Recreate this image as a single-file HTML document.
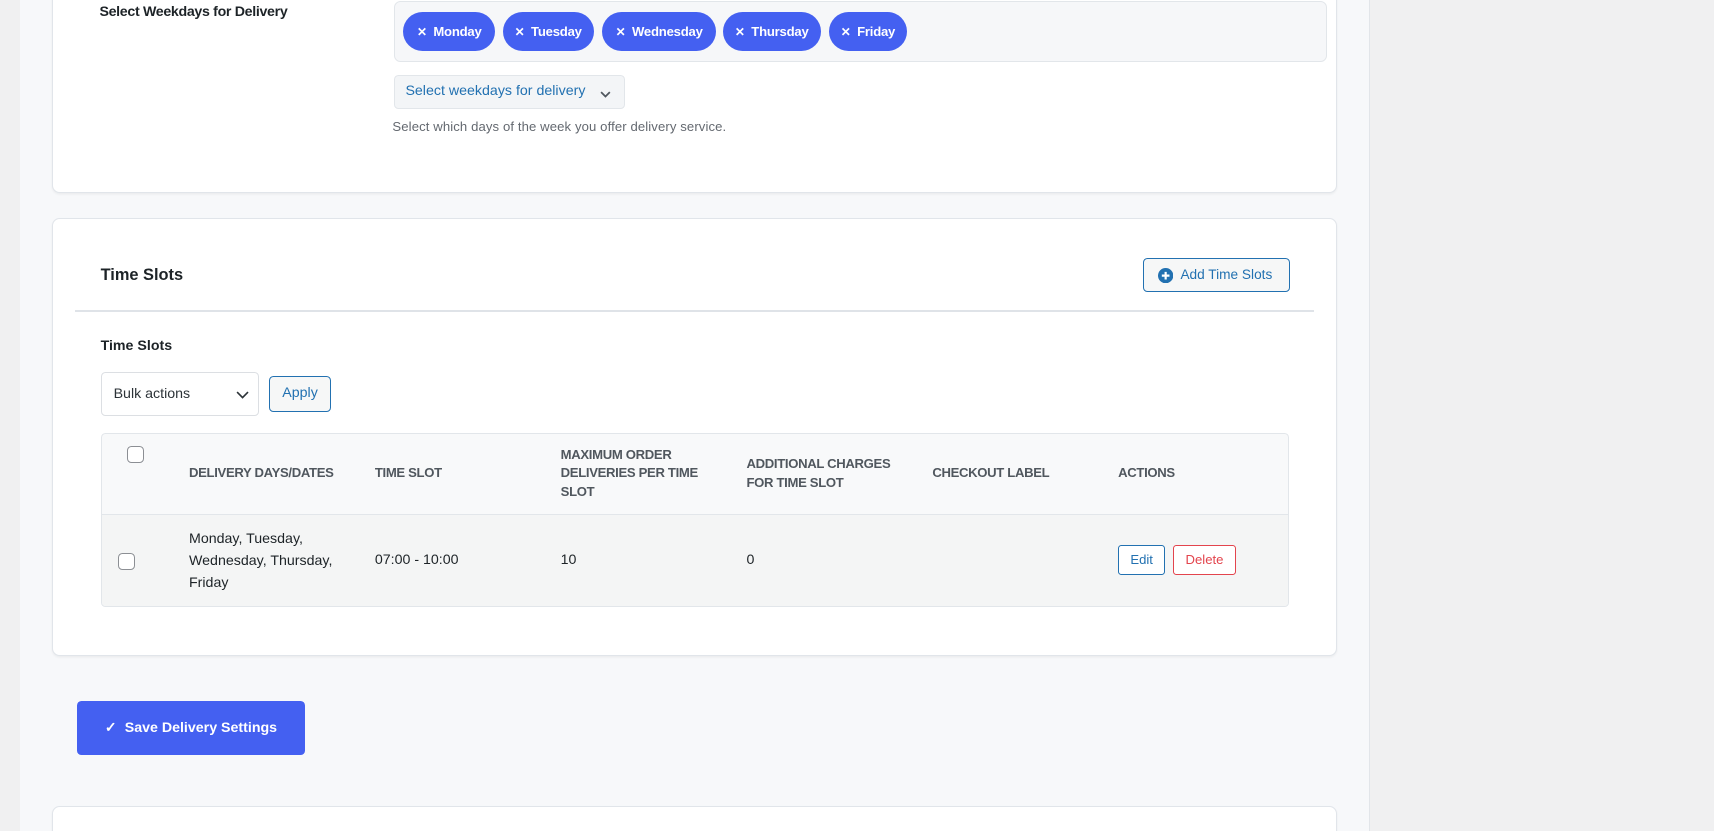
<!DOCTYPE html>
<html><head><meta charset="utf-8"><style>
*{box-sizing:border-box;margin:0;padding:0}
html,body{width:1714px;height:831px;overflow:hidden}
body{background:#f0f0f1;font-family:"Liberation Sans",sans-serif;}
#w{zoom:1.09311;position:relative;width:1568px;height:760px}
.main{position:absolute;left:18px;top:0;width:1235px;height:760px;background:#f7f8fa;border-right:1px solid #e2e5e9}
.card{position:absolute;left:48px;width:1175px;background:#fff;border:1px solid #e1e5ea;border-radius:7px;box-shadow:0 1px 2px rgba(0,0,0,.05)}
.abs{position:absolute}
.pill{position:absolute;top:11px;height:36px;background:#4460f1;color:#fff;border-radius:18px;font-size:12px;font-weight:bold;line-height:36px;text-align:center;letter-spacing:-0.2px}
.pill span{font-size:11px;margin-right:6px}
.th{position:absolute;top:0;height:73px;display:flex;align-items:center;font-size:12px;color:#50575e;text-transform:uppercase;line-height:17px;font-weight:bold;width:150px;letter-spacing:-0.3px}
.cb{position:absolute;width:16px;height:16px;border:1px solid #8c8f94;border-radius:4px;background:#fff}
.td{position:absolute;font-size:13px;color:#1d2327;line-height:20px}
</style></head><body><div id="w">
<div class="main"></div>
<div class="card" style="top:-10px;height:187px"></div>
<div class="abs" style="left:91px;top:4px;font-size:13px;color:#1d2327;font-weight:bold;letter-spacing:-0.3px">Select Weekdays for Delivery</div>
<div class="abs" style="left:360px;top:1px;width:854px;height:56px;background:#f6f7f9;border:1px solid #e2e6ea;border-radius:6px"></div>
<div class="pill" style="left:369px;width:84px"><span>✕</span>Monday</div>
<div class="pill" style="left:460px;width:83px"><span>✕</span>Tuesday</div>
<div class="pill" style="left:551px;width:104px"><span>✕</span>Wednesday</div>
<div class="pill" style="left:661px;width:90px"><span>✕</span>Thursday</div>
<div class="pill" style="left:758px;width:72px"><span>✕</span>Friday</div>
<div class="abs" style="left:360px;top:69px;width:212px;height:31px;background:#f3f5f7;border:1px solid #e2e6ea;border-radius:4px;font-size:13px;color:#2271b1;line-height:29px;padding-left:10px">Select weekdays for delivery
<svg style="position:absolute;left:188px;top:13px" width="10" height="7" viewBox="0 0 10 7"><path d="M1 1l4 4 4-4" fill="none" stroke="#50575e" stroke-width="1.6"/></svg></div>
<div class="abs" style="left:359px;top:109px;font-size:12px;color:#646970;letter-spacing:0.1px">Select which days of the week you offer delivery service.</div>

<div class="card" style="top:199px;height:401px"></div>
<div class="abs" style="left:92px;top:243px;font-size:15px;color:#1d2327;font-weight:bold">Time Slots</div>
<div class="abs" style="left:1046px;top:236px;width:134px;height:31px;border:1px solid #2271b1;border-radius:4px;background:#f6f7f7;color:#2271b1;font-size:12.5px;line-height:29px;padding-left:33px">Add Time Slots
<svg style="position:absolute;left:12px;top:8px" width="14" height="14" viewBox="0 0 14 14"><circle cx="7" cy="7" r="7" fill="#2271b1"/><path d="M7 3.5v7M3.5 7h7" stroke="#fff" stroke-width="2"/></svg></div>
<div class="abs" style="left:69px;top:284px;width:1133px;height:1px;background:#dfe3e8"></div>
<div class="abs" style="left:92px;top:309px;font-size:13px;color:#1d2327;font-weight:bold">Time Slots</div>
<div class="abs" style="left:92px;top:340px;width:145px;height:41px;border:1px solid #dcdfe3;border-radius:4px;background:#fff;font-size:13px;color:#2c3338;line-height:39px;padding-left:11px">Bulk actions
<svg style="position:absolute;left:123px;top:17px" width="12" height="8" viewBox="0 0 12 8"><path d="M1 1l5 5 5-5" fill="none" stroke="#2c3338" stroke-width="1.5"/></svg></div>
<div class="abs" style="left:246px;top:344px;width:57px;height:33px;border:1px solid #2271b1;border-radius:4px;background:#f6f7f7;color:#2271b1;font-size:13px;line-height:31px;text-align:center">Apply</div>

<div class="abs" style="left:92px;top:396px;width:1087px;height:159px;border:1px solid #e2e6ea;border-radius:4px;background:#f8f9fa;overflow:hidden">
 <div class="abs" style="left:0;top:73px;width:100%;height:86px;background:#f4f5f5;border-top:1px solid #e2e6ea"></div>
 <div class="cb" style="left:23px;top:11px"></div>
 <div class="th" style="left:80px">Delivery Days/Dates</div>
 <div class="th" style="left:250px">Time Slot</div>
 <div class="th" style="left:420px;width:140px">Maximum Order Deliveries per time slot</div>
 <div class="th" style="left:590px;width:145px">Additional Charges for time slot</div>
 <div class="th" style="left:760px">Checkout Label</div>
 <div class="th" style="left:930px">Actions</div>
 <div class="cb" style="left:15px;top:109px"></div>
 <div class="td" style="left:80px;top:87px;width:150px">Monday, Tuesday, Wednesday, Thursday, Friday</div>
 <div class="td" style="left:250px;top:106px">07:00 - 10:00</div>
 <div class="td" style="left:420px;top:106px">10</div>
 <div class="td" style="left:590px;top:106px">0</div>
 <div class="abs" style="left:930px;top:102px;width:43px;height:27px;border:1px solid #2271b1;border-radius:3px;color:#2271b1;font-size:12px;line-height:25px;text-align:center;background:#fff">Edit</div>
 <div class="abs" style="left:980px;top:102px;width:58px;height:27px;border:1px solid #e3444d;border-radius:3px;color:#e3444d;font-size:12px;line-height:25px;text-align:center;background:#fff">Delete</div>
</div>

<div class="abs" style="left:70px;top:641px;width:209px;height:50px;background:#4460f1;border-radius:4px;color:#fff;font-size:13px;font-weight:bold;line-height:50px;padding-left:26px">✓&nbsp; Save Delivery Settings</div>
<div class="card" style="top:737px;height:40px"></div>
</div></body></html>
